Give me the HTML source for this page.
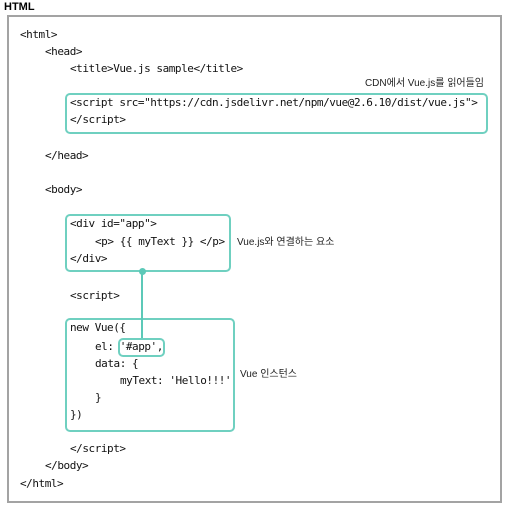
<!DOCTYPE html>
<html><head><meta charset="utf-8"><style>
body{margin:0;width:508px;height:508px;background:#fff;position:relative;overflow:hidden;font-family:"Liberation Sans","Noto Sans CJK KR",sans-serif}
.t{position:absolute;font-family:"DejaVu Sans Mono","Liberation Mono",monospace;font-size:11px;letter-spacing:-0.45px;color:#111;white-space:pre;line-height:12px}
.l{position:absolute;font-size:10px;color:#222;white-space:pre;line-height:12px}
.b{position:absolute;border:2px solid #6fd0c0;border-radius:5px;box-sizing:border-box}
</style></head><body>
<div class="l" style="left:4px;top:1px;font-weight:bold;font-size:11px;color:#000">HTML</div>
<div style="position:absolute;left:7px;top:15px;width:495px;height:488px;border:2px solid #a3a3a3;box-sizing:border-box"></div>

<div class="b" style="left:65px;top:93px;width:423px;height:41px"></div>
<div class="b" style="left:65px;top:214px;width:166px;height:58px"></div>
<div class="b" style="left:65px;top:318px;width:170px;height:114px"></div>
<div class="b" style="left:118px;top:338px;width:47px;height:19px"></div>
<div style="position:absolute;left:141px;top:271px;width:2px;height:67px;background:#5cc9b8"></div>
<div style="position:absolute;left:139px;top:268px;width:7px;height:7px;border-radius:50%;background:#5cc9b8"></div>

<div class="t" style="left:20px;top:29px">&lt;html&gt;</div>
<div class="t" style="left:45px;top:46px">&lt;head&gt;</div>
<div class="t" style="left:70px;top:63px">&lt;title&gt;Vue.js sample&lt;/title&gt;</div>
<div class="l" style="right:24px;top:78px">CDN에서 Vue.js를 읽어들임</div>
<div class="t" style="left:70px;top:97px">&lt;script src="https://cdn.jsdelivr.net/npm/vue@2.6.10/dist/vue.js"&gt;</div>
<div class="t" style="left:70px;top:114px">&lt;/script&gt;</div>
<div class="t" style="left:45px;top:150px">&lt;/head&gt;</div>
<div class="t" style="left:45px;top:184px">&lt;body&gt;</div>
<div class="t" style="left:70px;top:218px">&lt;div id="app"&gt;</div>
<div class="t" style="left:95px;top:236px">&lt;p&gt; {{ myText }} &lt;/p&gt;</div>
<div class="l" style="left:237px;top:237px">Vue.js와 연결하는 요소</div>
<div class="t" style="left:70px;top:253px">&lt;/div&gt;</div>
<div class="t" style="left:70px;top:290px">&lt;script&gt;</div>
<div class="t" style="left:70px;top:322px">new Vue({</div>
<div class="t" style="left:95px;top:341px">el: '#app',</div>
<div class="t" style="left:95px;top:358px">data: {</div>
<div class="t" style="left:120px;top:375px">myText: 'Hello!!!'</div>
<div class="l" style="left:240px;top:369px">Vue 인스턴스</div>
<div class="t" style="left:95px;top:392px">}</div>
<div class="t" style="left:70px;top:409px">})</div>
<div class="t" style="left:70px;top:443px">&lt;/script&gt;</div>
<div class="t" style="left:45px;top:460px">&lt;/body&gt;</div>
<div class="t" style="left:20px;top:478px">&lt;/html&gt;</div>
</body></html>
